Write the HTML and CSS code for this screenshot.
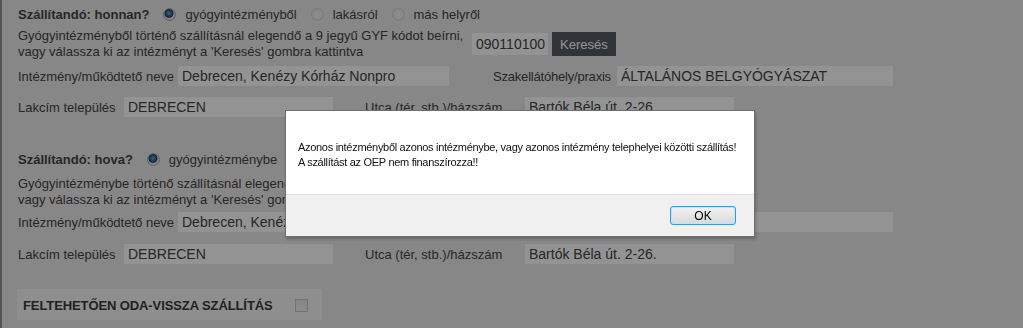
FILE: index.html
```html
<!DOCTYPE html>
<html lang="hu">
<head>
  <meta charset="UTF-8">
  <title>Szállítás</title>
  <link rel="stylesheet" href="styles.css">
</head>
<body>
  <div class="form">
    <!-- Honnan -->
    <div class="row row-title">
      <span class="title">Szállítandó: honnan?</span>
      <span class="choice"><span class="radio checked"></span>gyógyintézményből</span>
      <span class="choice"><span class="radio"></span>lakásról</span>
      <span class="choice"><span class="radio"></span>más helyről</span>
    </div>
    <div class="row row-hint">
      <div class="hint">Gyógyintézményből történő szállításnál elegendő a 9 jegyű GYF kódot beírni,<br>vagy válassza ki az intézményt a 'Keresés' gombra kattintva</div>
      <span class="field field-code">090110100</span>
      <span class="btn-search">Keresés</span>
    </div>
    <div class="row row-field">
      <span class="label label-inst">Intézmény/működtető neve</span>
      <span class="field field-inst">Debrecen, Kenézy Kórház Nonpro</span>
      <span class="label label-spec">Szakellátóhely/praxis</span>
      <span class="field field-spec">ÁLTALÁNOS BELGYÓGYÁSZAT</span>
    </div>
    <div class="row row-field row-addr">
      <span class="label label-city">Lakcím település</span>
      <span class="field field-city">DEBRECEN</span>
      <span class="label label-street">Utca (tér, stb.)/házszám</span>
      <span class="field field-street">Bartók Béla út. 2-26.</span>
    </div>

    <!-- Hova -->
    <div class="row row-title row-title2">
      <span class="title">Szállítandó: hova?</span>
      <span class="choice"><span class="radio checked"></span>gyógyintézménybe</span>
    </div>
    <div class="row row-hint row-hint2">
      <div class="hint">Gyógyintézménybe történő szállításnál elegendő a 9 jegyű GYF kódot beírni,<br>vagy válassza ki az intézményt a 'Keresés' gombra kattintva</div>
    </div>
    <div class="row row-field row-field2">
      <span class="label label-inst">Intézmény/működtető neve</span>
      <span class="field field-inst">Debrecen, Kenézy Kórház Nonpro</span>
      <span class="label label-spec">Szakellátóhely/praxis</span>
      <span class="field field-spec"></span>
    </div>
    <div class="row row-field row-addr">
      <span class="label label-city">Lakcím település</span>
      <span class="field field-city">DEBRECEN</span>
      <span class="label label-street">Utca (tér, stb.)/házszám</span>
      <span class="field field-street">Bartók Béla út. 2-26.</span>
    </div>

    <div class="roundtrip">
      <span class="roundtrip-label">FELTEHETŐEN ODA-VISSZA SZÁLLÍTÁS</span>
      <span class="checkbox"></span>
    </div>
  </div>

  <!-- Modal alert -->
  <div class="overlay"></div>
  <div class="dialog">
    <div class="dialog-body">
      Azonos intézményből azonos intézménybe, vagy azonos intézmény telephelyei közötti szállítás!<br>
      A szállítást az OEP nem finanszírozza!!
    </div>
    <div class="dialog-footer">
      <span class="btn-ok">OK</span>
    </div>
  </div>
</body>
</html>
```

FILE: styles.css
```css
body {
  margin: 0;
  height: 328px;
  overflow: hidden;
  background-color: #eaeaea;
  border-left: 2px solid #939393;
  font-family: "Liberation Sans", Arial, sans-serif;
  font-size: 13px;
  color: #444;
}

.form {
  padding-left: 16px;
}

.row {
  display: flex;
  align-items: center;
}

/* Radio rows */
.row-title {
  height: 20px;
  margin-top: 4px;
}

.row-title2 {
  margin-top: 32px;
}

.title {
  font-weight: bold;
}

.choice {
  display: flex;
  align-items: center;
  gap: 9px;
  margin-left: 14px;
}

.radio {
  width: 11px;
  height: 11px;
  border-radius: 50%;
  border: 1px solid #d2d2d2;
  background: radial-gradient(circle, #f6f6f6 0, #e2e2e2 100%);
}

.radio.checked {
  border-color: #a8a8a8;
  background: radial-gradient(circle at 45% 40%, #7aa3c8 0, #2f5f8c 3px, #1c3e60 4px, #e8e8e8 5px, #d8d8d8 100%);
}

/* Hint text + GYF code */
.row-hint {
  margin-top: 4px;
  height: 32px;
}

.row-hint2 {
  margin-top: 7px;
}

.hint {
  width: 454px;
  line-height: 16px;
}

.field {
  display: flex;
  align-items: center;
  height: 20px;
  padding-left: 4px;
  box-sizing: border-box;
  background-color: #ffffff;
  color: #444;
  font-size: 14px;
  white-space: nowrap;
  overflow: hidden;
}

.field-code {
  width: 76px;
  height: 22px;
}

.btn-search {
  margin-left: 4px;
  height: 24px;
  padding: 0 8px;
  display: flex;
  align-items: center;
  background-color: #545961;
  color: #ffffff;
  font-size: 13px;
}

/* Label + field rows */
.row-field {
  margin-top: 6px;
}

.row-field2 {
  margin-top: 4px;
}

.row-addr {
  margin-top: 11px;
}

.row-field2 + .row-addr {
  margin-top: 12px;
}

.label-inst { width: 160px; }
.field-inst { width: 271px; }
.label-spec { width: 124px; margin-left: 44px; letter-spacing: -0.2px; }
.field-spec { width: 276px; }
.label-city { width: 106px; }
.field-city { width: 209px; }
.label-street { width: 160px; margin-left: 32px; }
.field-street { width: 209px; }

/* Round trip box */
.roundtrip {
  display: flex;
  align-items: center;
  justify-content: space-between;
  width: 305px;
  height: 31px;
  margin-top: 25px;
  margin-left: -1px;
  padding: 2px 14px 0 6px;
  box-sizing: border-box;
  background-color: #f6f6f6;
}

.roundtrip-label {
  font-weight: bold;
  color: #3a3a3a;
  letter-spacing: -0.1px;
}

.checkbox {
  width: 11px;
  height: 11px;
  border: 1px solid #c8c8c8;
  background: linear-gradient(#e6e6e6, #f4f4f4);
}

/* Modal */
.overlay {
  position: fixed;
  inset: 0;
  background-color: rgba(0, 0, 0, 0.424);
}

.dialog {
  position: fixed;
  left: 285px;
  top: 110px;
  width: 470px;
  height: 127px;
  box-sizing: border-box;
  border: 1px solid #6f6f6f;
  background-color: #ffffff;
  box-shadow: 1px 2px 3px rgba(0, 0, 0, 0.25);
  display: flex;
  flex-direction: column;
  font-family: "Liberation Sans", Arial, sans-serif;
  font-size: 11px;
  color: #111;
}

.dialog-body {
  height: 83px;
  padding: 29px 0 0 12px;
  box-sizing: border-box;
  line-height: 15px;
  white-space: nowrap;
  letter-spacing: -0.3px;
}

.dialog-footer {
  flex-grow: 1;
  display: flex;
  align-items: center;
  justify-content: flex-end;
  padding-right: 18px;
  background-color: #f0f0f0;
  border-top: 1px solid #dfdfdf;
}

.btn-ok {
  width: 64px;
  height: 17px;
  display: flex;
  align-items: center;
  justify-content: center;
  border: 1px solid #3c9bd8;
  border-radius: 3px;
  background: linear-gradient(#f2f2f2, #e6e6e6 50%, #d9d9d9);
  box-shadow: inset 0 0 0 1px #bfe3f9;
  color: #000;
  font-size: 12px;
  letter-spacing: 0;
}
```
